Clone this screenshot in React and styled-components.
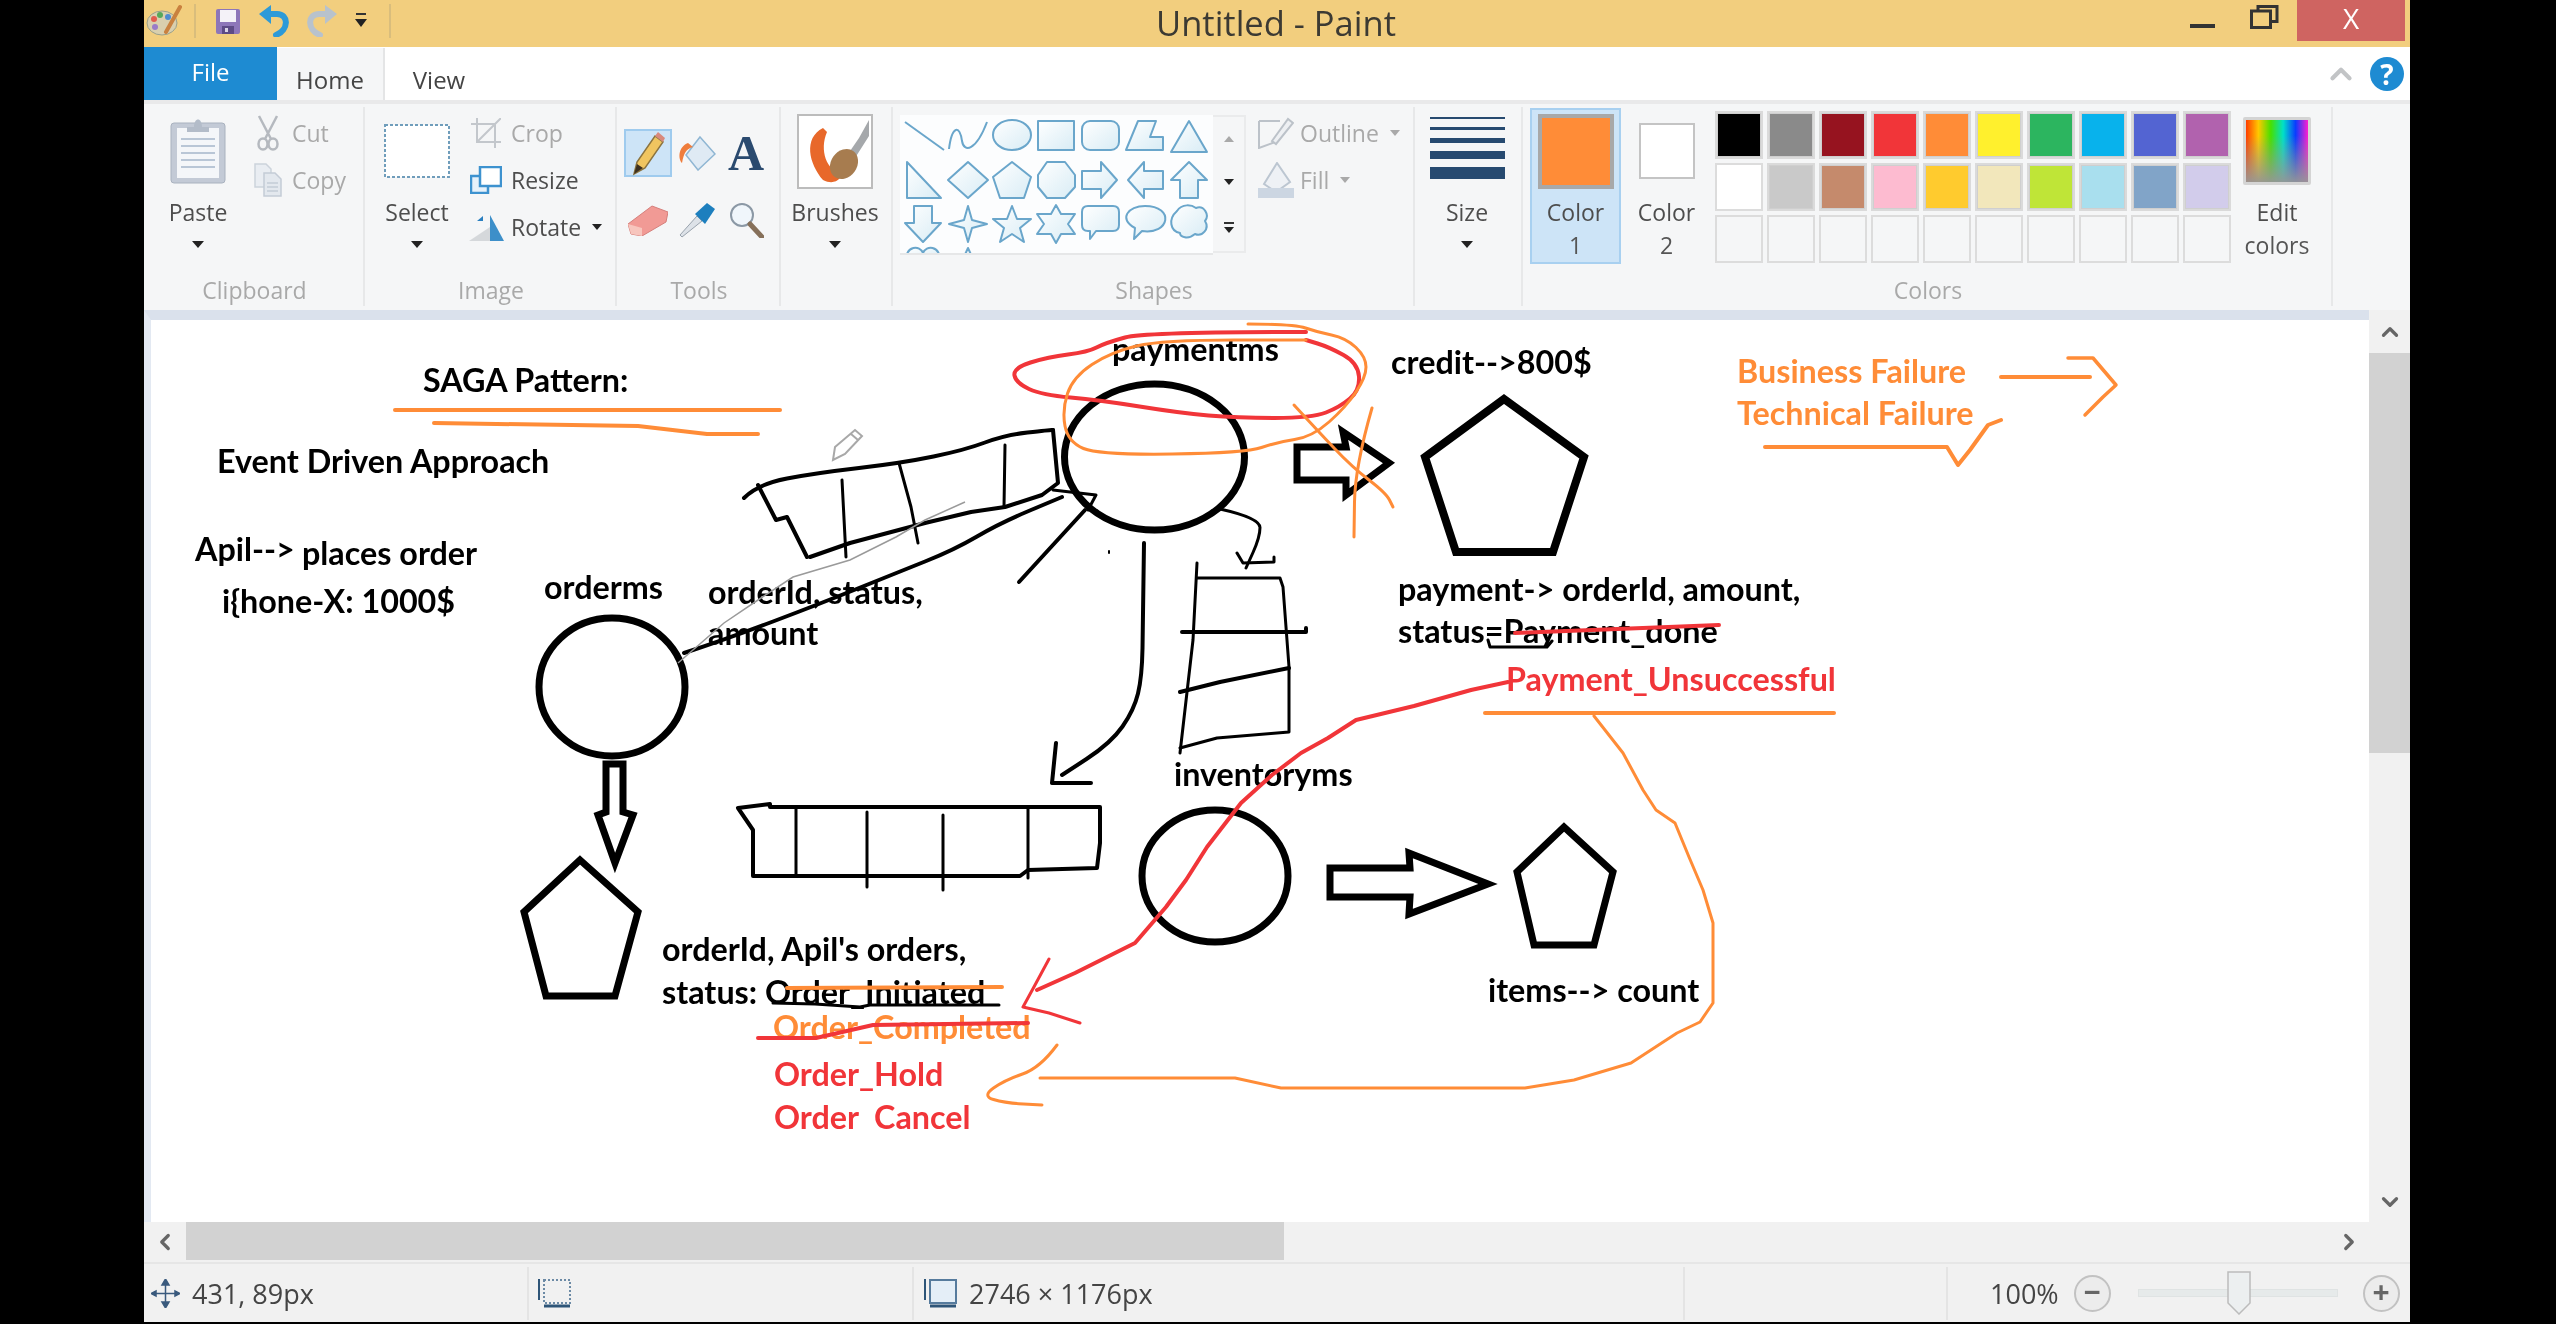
import styled, { createGlobalStyle } from "styled-components";
import { ChevronLeft, ChevronRight, ChevronUp, ChevronDown } from "lucide-react";

const ORANGE = "#ff8c37";
const RED = "#f13539";

const GlobalStyle = createGlobalStyle`
  html, body { margin: 0; padding: 0; background: #000; }
  * { box-sizing: border-box; }
`;

const palette = [
  "#000000", "#8a8a8a", "#96131f", "#f13539", "#ff8c37", "#fff02d", "#2cb55f", "#08b2ec", "#5364d2", "#b162ae",
  "#ffffff", "#c9c9c9", "#c58a6c", "#fdbbd0", "#ffcb2e", "#f2e7bb", "#bfe537", "#a9dfee", "#81a4c8", "#d2cceb",
  null, null, null, null, null, null, null, null, null, null,
];

const notes = [
  { x: 423, y: 381, t: "SAGA Pattern:" },
  { x: 217, y: 462, t: "Event Driven Approach" },
  { x: 195, y: 550, t: "Apil-->" },
  { x: 302, y: 554, t: "places order" },
  { x: 222, y: 602, t: "i{hone-X: 1000$" },
  { x: 544, y: 588, t: "orderms" },
  { x: 708, y: 593, t: "orderId, status," },
  { x: 708, y: 634, t: "amount" },
  { x: 1112, y: 350, t: "paymentms" },
  { x: 1391, y: 363, t: "credit-->800$" },
  { x: 1398, y: 590, t: "payment-> orderId, amount," },
  { x: 1398, y: 632, t: "status=Payment_done" },
  { x: 1506, y: 680, t: "Payment_Unsuccessful", c: RED },
  { x: 1174, y: 775, t: "inventoryms" },
  { x: 1737, y: 372, t: "Business Failure", c: ORANGE },
  { x: 1737, y: 414, t: "Technical Failure", c: ORANGE },
  { x: 662, y: 950, t: "orderId, Apil's orders," },
  { x: 662, y: 993, t: "status: Order_Initiated" },
  { x: 773, y: 1028, t: "Order_Completed", c: ORANGE },
  { x: 774, y: 1075, t: "Order_Hold", c: RED },
  { x: 774, y: 1118, t: "Order  Cancel", c: RED },
  { x: 1488, y: 991, t: "items--> count" },
];

// path through the midpoints, so a few points read as a hand drawn curve
function smooth(pts) {
  let d = `M${pts[0][0]} ${pts[0][1]}`;
  for (let i = 1; i < pts.length - 1; i++) {
    const mx = (pts[i][0] + pts[i + 1][0]) / 2;
    const my = (pts[i][1] + pts[i + 1][1]) / 2;
    d += ` Q${pts[i][0]} ${pts[i][1]} ${mx} ${my}`;
  }
  const last = pts[pts.length - 1];
  return d + ` L${last[0]} ${last[1]}`;
}

function line(pts) {
  return "M" + pts.map((p) => p.join(" ")).join(" L");
}

const blackStrokes = [
  // payment queue
  { d: smooth([[744, 498], [758, 484], [816, 473], [902, 463], [965, 450], [1005, 435], [1050, 430], [1053, 430]]), w: 4 },
  { d: line([[1053, 430], [1058, 483], [1042, 495], [1005, 507], [971, 512], [925, 523], [850, 543], [810, 557]]), w: 4 },
  { d: line([[758, 485], [776, 520], [787, 517], [807, 557]]), w: 4 },
  { d: line([[842, 480], [846, 557]]), w: 3 },
  { d: line([[899, 463], [911, 507], [918, 543]]), w: 3 },
  { d: line([[1005, 445], [1004, 507]]), w: 3 },
  { d: smooth([[684, 653], [724, 640], [822, 603], [896, 573], [954, 550], [1000, 523], [1062, 497]]), w: 4 },
  { d: line([[1085, 510], [1019, 582]]), w: 4 },
  { d: line([[1053, 490], [1096, 495], [1088, 510]]), w: 3 },
  { d: line([[1109, 551], [1109, 553]]), w: 2 },
  // down to the order queue
  { d: smooth([[1144, 543], [1143, 620], [1142, 677], [1134, 710], [1111, 743], [1062, 775]]), w: 4 },
  { d: line([[1056, 743], [1052, 783], [1091, 783]]), w: 4 },
  // to the inventory queue
  { d: smooth([[1220, 509], [1260, 518], [1260, 537], [1246, 568]]), w: 3 },
  { d: line([[1237, 553], [1243, 563], [1274, 562], [1274, 557]]), w: 3 },
  // inventory queue
  { d: line([[1197, 563], [1193, 640], [1180, 753]]), w: 3 },
  { d: line([[1197, 578], [1280, 578], [1283, 587], [1289, 667], [1289, 732], [1217, 738], [1180, 748]]), w: 3 },
  { d: line([[1182, 632], [1306, 632], [1306, 628]]), w: 4 },
  { d: line([[1180, 692], [1220, 682], [1289, 668]]), w: 4 },
  // order queue
  { d: line([[738, 808], [770, 804], [770, 807], [1100, 807], [1100, 843], [1097, 868], [1028, 870], [1020, 876], [753, 876], [753, 830], [738, 808]]), w: 4 },
  { d: line([[796, 807], [796, 876]]), w: 3 },
  { d: line([[867, 812], [867, 887]]), w: 3 },
  { d: line([[943, 815], [943, 890]]), w: 3 },
  { d: line([[1028, 808], [1028, 878]]), w: 3 },
  // scribbles on the text
  { d: line([[1488, 640], [1490, 647], [1547, 647], [1552, 641]]), w: 3 },
  { d: line([[773, 1003], [815, 1004], [860, 1007], [870, 1005], [999, 1005]]), w: 3 },
];

const heavyPolys = [
  { p: "1297,447 1346,447 1343,432 1389,463 1346,495 1346,480 1297,480", w: 7 },
  { p: "1504,399 1584,457 1553,552 1456,552 1425,457", w: 8 },
  { p: "606,764 623,764 623,812 633,815 615,863 598,815 606,812", w: 7 },
  { p: "580,860 638,912 615,996 546,996 524,912", w: 7 },
  { p: "1330,868 1410,868 1409,853 1488,884 1409,914 1410,897 1330,897", w: 7 },
  { p: "1564,827 1613,872 1594,945 1534,945 1517,872", w: 7 },
];

const colorStrokes = [
  { c: ORANGE, w: 4, d: line([[395, 410], [780, 410]]) },
  { c: ORANGE, w: 4, d: line([[434, 423], [638, 426], [707, 434], [758, 434]]) },
  { c: RED, w: 4, d: smooth([[1306, 332], [1145, 332], [1105, 343], [1088, 352], [1048, 357], [1013, 368], [1016, 383], [1042, 395], [1099, 400], [1180, 413], [1237, 418], [1312, 418], [1340, 407], [1360, 390], [1358, 363], [1329, 347], [1306, 340]]) },
  { c: ORANGE, w: 3, d: smooth([[1248, 324], [1294, 324], [1317, 332], [1346, 338], [1366, 357], [1366, 377], [1346, 407], [1312, 437], [1277, 442], [1246, 453], [1099, 455], [1068, 442], [1062, 410], [1073, 377], [1111, 352], [1162, 340], [1306, 340]]) },
  { c: ORANGE, w: 3, d: smooth([[1294, 405], [1317, 430], [1352, 467], [1386, 493], [1393, 507]]) },
  { c: ORANGE, w: 3, d: smooth([[1372, 408], [1355, 467], [1354, 537]]) },
  { c: RED, w: 4, d: line([[1515, 633], [1719, 625]]) },
  { c: ORANGE, w: 4, d: line([[787, 988], [1002, 987]]) },
  { c: RED, w: 4, d: line([[758, 1038], [816, 1038], [873, 1025], [1028, 1023]]) },
  { c: ORANGE, w: 4, d: line([[2001, 377], [2090, 377]]) },
  { c: ORANGE, w: 3.5, d: line([[2068, 358], [2093, 358], [2116, 385], [2103, 397], [2085, 415]]) },
  { c: ORANGE, w: 4, d: line([[1765, 447], [1947, 447], [1958, 465], [1970, 450], [1988, 425], [2001, 420]]) },
  { c: ORANGE, w: 4, d: line([[1485, 713], [1834, 713]]) },
  { c: ORANGE, w: 3, d: line([[1594, 716], [1623, 753], [1643, 790], [1656, 810], [1675, 823], [1689, 857], [1703, 890], [1713, 923], [1713, 1003], [1700, 1022], [1677, 1033], [1631, 1063], [1574, 1080], [1525, 1088], [1281, 1088], [1235, 1078], [1040, 1078]]) },
  { c: ORANGE, w: 3, d: smooth([[1057, 1045], [1040, 1068], [1005, 1080], [982, 1096], [1005, 1103], [1042, 1105]]) },
  { c: RED, w: 4, d: line([[1508, 682], [1471, 690], [1414, 706], [1356, 720], [1328, 738], [1301, 753], [1272, 775], [1241, 803], [1207, 847], [1186, 880], [1166, 907], [1135, 943], [1105, 958], [1075, 973], [1037, 990]]) },
  { c: RED, w: 3, d: line([[1049, 959], [1035, 985], [1023, 1007], [1049, 1013], [1080, 1023]]) },
];

function Sketch() {
  return (
    <SketchLayer viewBox="151 320 2218 902" width="2218" height="902">
      <g fill="none" stroke="#000" strokeLinejoin="round" strokeLinecap="round">
        <ellipse cx="1154.5" cy="457" rx="90" ry="73" strokeWidth="7" />
        <ellipse cx="612" cy="687" rx="73" ry="69" strokeWidth="7" />
        <ellipse cx="1215" cy="876" rx="73" ry="66" strokeWidth="7" />
        {heavyPolys.map((s) => (
          <polygon key={s.p} points={s.p} strokeWidth={s.w} strokeLinejoin="miter" />
        ))}
        {blackStrokes.map((s) => (
          <path key={s.d} d={s.d} strokeWidth={s.w} />
        ))}
      </g>
      <path
        d={line([[965, 502], [925, 520], [896, 537], [850, 560], [793, 577], [758, 600], [724, 623], [701, 643], [678, 663]])}
        fill="none"
        stroke="#9a9a9a"
        strokeWidth="1.5"
      />
      <g fill="none" strokeLinejoin="round" strokeLinecap="round">
        {colorStrokes.map((s) => (
          <path key={s.d} d={s.d} stroke={s.c} strokeWidth={s.w} />
        ))}
      </g>
      <path d="M833 460 L835 447 L855 430 L862 436 L845 454 Z M851 434 L858 440" fill="#fff" stroke="#a8a8a8" strokeWidth="2" />
    </SketchLayer>
  );
}

function PaintLogo() {
  return (
    <svg width="36" height="34" viewBox="0 0 36 34">
      <ellipse cx="16" cy="19" rx="15" ry="12" fill="#d9cfae" stroke="#9aa08a" />
      <circle cx="8" cy="15" r="3" fill="#e25b4d" />
      <circle cx="14" cy="11" r="3" fill="#57a85a" />
      <circle cx="22" cy="13" r="3" fill="#4f8bd0" />
      <circle cx="9" cy="23" r="3" fill="#9a7bc8" />
      <path d="M20 28 L34 3" stroke="#c9813f" strokeWidth="4" strokeLinecap="round" />
    </svg>
  );
}

function SaveIcon() {
  return (
    <svg width="24" height="25" viewBox="0 0 24 25">
      <rect width="24" height="25" rx="2" fill="#8d76b9" />
      <rect x="4" y="1" width="16" height="12" fill="#f4f2f8" />
      <rect x="6" y="17" width="12" height="8" fill="#5d4b86" />
      <rect x="9" y="19" width="3" height="4" fill="#d8d2e6" />
    </svg>
  );
}

function TurnArrow({ color, flip }) {
  return (
    <svg width="32" height="32" viewBox="0 0 32 32" style={flip ? { transform: "scaleX(-1)" } : undefined}>
      <path d="M9 9 H18 C30 9 30 25 17 30" fill="none" stroke={color} strokeWidth="6" strokeLinecap="round" />
      <path d="M12 0 L12 19 L0 9 Z" fill={color} />
    </svg>
  );
}

function QatMenu() {
  return (
    <svg width="12" height="18" viewBox="0 0 12 18">
      <rect x="1" y="1" width="10" height="2" fill="#333" />
      <path d="M0 7 H12 L6 15 Z" fill="#222" />
    </svg>
  );
}

function ClipboardIcon() {
  return (
    <svg width="56" height="68" viewBox="0 0 56 68">
      <rect x="1" y="6" width="54" height="60" rx="3" fill="#c3cad6" stroke="#a9b2bf" />
      <rect x="7" y="11" width="42" height="50" fill="#f4f6f9" />
      <path d="M11 22 H45 M11 29 H45 M11 36 H45 M11 43 H45 M11 50 H45" stroke="#b9c6d6" strokeWidth="2" />
      <path d="M17 10 H24 C24 0 32 0 32 10 H39 V15 H17 Z" fill="#b3bcc9" />
    </svg>
  );
}

function ScissorsIcon() {
  return (
    <svg width="24" height="36" viewBox="0 0 24 36" fill="none" stroke="#b5b9bf" strokeWidth="2.5">
      <path d="M3 1 L15 24 M21 1 L9 24" />
      <ellipse cx="7" cy="29" rx="4.5" ry="5.5" />
      <ellipse cx="17" cy="29" rx="4.5" ry="5.5" />
    </svg>
  );
}

function CopyIcon() {
  return (
    <svg width="28" height="34" viewBox="0 0 28 34">
      <path d="M1 1 H12 L17 6 V24 H1 Z" fill="#e9edf2" stroke="#ccd3db" strokeWidth="1.5" />
      <path d="M10 10 H21 L27 16 V33 H10 Z" fill="#e3e8ee" stroke="#c4ccd6" strokeWidth="1.5" />
      <path d="M13 20 H24 M13 24 H24 M13 28 H24" stroke="#c4ccd6" strokeWidth="1.5" />
    </svg>
  );
}

function SelectIcon() {
  return (
    <svg width="66" height="54" viewBox="0 0 66 54">
      <rect x="1" y="1" width="64" height="52" fill="#fff" stroke="#6f9dbb" strokeWidth="2" strokeDasharray="3 2" />
    </svg>
  );
}

function CropIcon() {
  return (
    <svg width="30" height="30" viewBox="0 0 30 30" fill="none" stroke="#c3c7cc" strokeWidth="2">
      <path d="M0 6 H24 V30 M6 0 V24 H30 M6 24 L30 0" />
    </svg>
  );
}

function ResizeIcon() {
  return (
    <svg width="32" height="28" viewBox="0 0 32 28" fill="#fff" stroke="#3d92cf" strokeWidth="2.5">
      <rect x="1" y="10" width="17" height="17" fill="#e6f1fa" />
      <rect x="10" y="1" width="21" height="19" />
    </svg>
  );
}

function RotateIcon() {
  return (
    <svg width="35" height="28" viewBox="0 0 35 28">
      <path d="M21 2 L35 28 H21 Z" fill="#3d8fc9" />
      <path d="M21 14 L21 28 H0 Z" fill="#d5d8db" />
      <path d="M8 8 L14 3 L14 8 Z" fill="#2a7fc0" />
    </svg>
  );
}

function PencilIcon() {
  return (
    <svg width="34" height="46" viewBox="0 0 34 46">
      <path d="M3 44 L6 32 L24 6 L32 12 L14 38 Z" fill="#f0c560" stroke="#8b7440" strokeWidth="1.5" />
      <path d="M24 6 L27 2 L34 8 L32 12 Z" fill="#d9897c" />
      <path d="M3 44 L6 34 L12 38 Z" fill="#3c3020" />
    </svg>
  );
}

function FillIcon() {
  return (
    <svg width="38" height="36" viewBox="0 0 38 36">
      <path d="M22 2 L37 19 L20 35 L8 20 Z" fill="#dfeaf4" stroke="#8fb6d3" strokeWidth="1.5" />
      <path d="M10 8 C0 12 0 24 4 28 C6 18 8 14 15 12 Z" fill="#ef7d3c" />
    </svg>
  );
}

function EraserIcon() {
  return (
    <svg width="40" height="32" viewBox="0 0 40 32">
      <path d="M0 20 L24 2 L40 8 L38 18 L14 32 L3 30 Z" fill="#f19a95" stroke="#d57f7b" />
      <path d="M0 20 L14 24 L14 32 L3 30 Z" fill="#f7c5bd" />
    </svg>
  );
}

function PickerIcon() {
  return (
    <svg width="37" height="36" viewBox="0 0 37 36">
      <path d="M3 35 L1 33 L18 14 L23 19 Z" fill="#dde2e8" stroke="#99a3ad" />
      <path d="M16 12 L28 1 L36 7 L26 22 Z" fill="#1d7fbe" />
    </svg>
  );
}

function MagnifierIcon() {
  return (
    <svg width="35" height="36" viewBox="0 0 35 36" fill="none">
      <circle cx="13" cy="13" r="11" fill="#f0f6fb" stroke="#8b98a5" strokeWidth="2" />
      <path d="M21 22 L33 35" stroke="#86705a" strokeWidth="5" strokeLinecap="round" />
    </svg>
  );
}

function BrushesIcon() {
  return (
    <svg width="76" height="75" viewBox="0 0 76 75">
      <rect x="1" y="1" width="74" height="73" fill="#fff" stroke="#bcbcbc" strokeWidth="2" />
      <path d="M26 14 C6 24 12 50 26 66 C38 72 46 64 44 58 C30 58 22 36 30 18 Z" fill="#e8682a" />
      <path d="M40 56 L62 24 L72 6 L72 22 L58 44 Z" fill="#a5a8ab" />
      <ellipse cx="47" cy="50" rx="13" ry="16" fill="#a77c4f" transform="rotate(35 47 50)" />
    </svg>
  );
}

function ShapeGallery() {
  return (
    <svg width="313" height="140" viewBox="0 0 313 140">
      <defs>
        <linearGradient id="shapeFill" x1="0" y1="0" x2="1" y2="1">
          <stop offset="0" stopColor="#ffffff" />
          <stop offset="1" stopColor="#d8ecf5" />
        </linearGradient>
      </defs>
      <g fill="url(#shapeFill)" stroke="#6aa6cb" strokeWidth="2" strokeLinejoin="round">
        <path d="M5 7 L44 35" fill="none" />
        <path d="M49 34 C52 10 60 10 62 26 C64 38 76 36 87 7" fill="none" />
        <ellipse cx="112" cy="20" rx="19" ry="15" />
        <rect x="138" y="6" width="36" height="29" />
        <rect x="182" y="6" width="37" height="29" rx="8" />
        <polygon points="226,35 238,6 256,6 250,22 263,22 263,35" />
        <polygon points="289,6 307,37 271,37" />

        <polygon points="7,47 41,83 7,83" />
        <polygon points="68,47 88,65 68,83 48,65" />
        <polygon points="112,47 131,62 124,83 100,83 93,62" />
        <polygon points="147,47 165,47 175,60 175,72 165,83 147,83 138,72 138,60" />
        <polygon points="182,56 201,56 201,47 217,65 201,83 201,74 182,74" />
        <polygon points="263,56 244,56 244,47 228,65 244,83 244,74 263,74" />
        <polygon points="289,47 307,65 298,65 298,83 280,83 280,65 271,65" />

        <polygon points="14,91 32,91 32,108 41,108 23,127 5,108 14,108" />
        <polygon points="68,91 72,105 87,109 72,113 68,127 64,113 49,109 64,105" />
        <polygon points="112,91 117,104 131,104 120,113 124,127 112,119 100,127 104,113 93,104 107,104" />
        <polygon points="156,90 161,99 175,99 168,109 175,119 161,119 156,128 151,119 137,119 144,109 137,99 151,99" />
        <path d="M188 91 H213 Q219 91 219 97 V110 Q219 116 213 116 H196 L190 124 V116 H188 Q182 116 182 110 V97 Q182 91 188 91 Z" />
        <path d="M245 91 C275 91 270 120 242 116 L234 124 L235 113 C218 104 228 91 245 91 Z" />
        <path d="M277 96 C282 88 292 90 296 93 C304 90 310 100 305 106 C310 114 302 122 295 119 C288 125 280 122 280 118 C270 116 268 104 277 96 Z" />

        <path d="M6 146 C6 130 20 130 23 138 C26 130 40 130 40 146" />
        <path d="M68 133 L74 146 H62 Z" />
      </g>
    </svg>
  );
}

function OutlineIcon() {
  return (
    <svg width="36" height="32" viewBox="0 0 36 32" fill="none" stroke="#bcc2c9" strokeWidth="2">
      <path d="M1 4 H22 M1 4 V31 L20 24 L24 12" />
      <path d="M14 24 L30 2 L35 6 L18 27 Z" fill="#eef0f3" />
    </svg>
  );
}

function FillToolIcon() {
  return (
    <svg width="36" height="36" viewBox="0 0 36 36">
      <path d="M6 22 L19 1 L32 20 L18 30 Z" fill="#eef1f5" stroke="#bcc6d1" strokeWidth="2" />
      <rect x="0" y="26" width="36" height="10" fill="#ccd6e2" />
    </svg>
  );
}

function MoveIcon() {
  return (
    <svg width="29" height="29" viewBox="0 0 29 29" fill="#3a5a7d" stroke="#3a5a7d" strokeWidth="1.5">
      <path d="M14.5 1 V28 M1 14.5 H28" fill="none" />
      <path d="M14.5 0 L11 6 H18 Z M14.5 29 L11 23 H18 Z M0 14.5 L5 12 V17 Z M29 14.5 L24 12 V17 Z" />
    </svg>
  );
}

function SizeIcon({ dashed }) {
  return (
    <svg width="34" height="31" viewBox="0 0 34 31">
      <rect x="7" y="2" width="26" height="23" fill={dashed ? "none" : "#e4eef7"} stroke={dashed ? "#6c8aa5" : "#567b9d"} strokeWidth="2" strokeDasharray={dashed ? "2 2" : undefined} />
      <path d="M2 1 V22" stroke="#2e5578" strokeWidth="2" />
      <path d="M7 28 H33" stroke="#2e5578" strokeWidth="3" />
    </svg>
  );
}

function WindowRestore() {
  return (
    <svg width="29" height="24" viewBox="0 0 29 24" fill="none" stroke="#333" strokeWidth="3" style={{ marginTop: 5 }}>
      <rect x="8" y="1.5" width="19" height="15" />
      <rect x="1.5" y="6" width="19" height="16.5" fill="#f2ce7e" />
    </svg>
  );
}

function SliderThumb() {
  return (
    <svg width="24" height="44" viewBox="0 0 24 44">
      <path d="M1 1 H23 V32 L12 43 L1 32 Z" fill="#eceff0" stroke="#bcbcbc" strokeWidth="1.5" />
    </svg>
  );
}

export default function App() {
  return (
    <>
      <GlobalStyle />
      <Page>
        <Window>
          <TitleBar>
            <QuickAccess>
              <QatItem $ml={2}><PaintLogo /></QatItem>
              <QatItem $ml={12}><QatRule /></QatItem>
              <QatItem $ml={20}><SaveIcon /></QatItem>
              <QatItem $ml={19}><TurnArrow color="#2d9ad8" /></QatItem>
              <QatItem $ml={14}><TurnArrow color="#b8c2cc" flip /></QatItem>
              <QatItem $ml={18}><QatMenu /></QatItem>
              <QatItem $ml={22}><QatRule /></QatItem>
            </QuickAccess>
            <Title>Untitled - Paint</Title>
            <WindowControls>
              <MinimizeBar />
              <WindowRestore />
              <CloseButton>X</CloseButton>
            </WindowControls>
          </TitleBar>

          <TabRow>
            <Tabs>
              <FileTab>File</FileTab>
              <Tab $active>Home</Tab>
              <Tab>View</Tab>
            </Tabs>
            <TabTools>
              <CollapseChevron size={34} strokeWidth={3} />
              <HelpButton>?</HelpButton>
            </TabTools>
          </TabRow>

          <Ribbon>
            <Group $w={221} label="Clipboard">
              <BigTool $w={76} $ml={16}>
                <IconSlot $pt={3}><ClipboardIcon /></IconSlot>
                <BigLabel>Paste</BigLabel>
                <CaretLine><Caret /></CaretLine>
              </BigTool>
              <SmallList $ml={13}>
                <SmallRow $slot={38}><span><ScissorsIcon /></span><SmallText $muted>Cut</SmallText></SmallRow>
                <SmallRow $slot={38}><span><CopyIcon /></span><SmallText $muted>Copy</SmallText></SmallRow>
              </SmallList>
            </Group>

            <Group $w={252} label="Image">
              <BigTool $w={76} $ml={14}>
                <IconSlot $pt={10}><SelectIcon /></IconSlot>
                <BigLabel>Select</BigLabel>
                <CaretLine><Caret /></CaretLine>
              </BigTool>
              <SmallList $ml={11}>
                <SmallRow $slot={40}><span><CropIcon /></span><SmallText $muted>Crop</SmallText></SmallRow>
                <SmallRow $slot={40}><span><ResizeIcon /></span><SmallText>Resize</SmallText></SmallRow>
                <SmallRow $slot={40}><span><RotateIcon /></span><SmallText>Rotate</SmallText><Caret $small /></SmallRow>
              </SmallList>
            </Group>

            <Group $w={164} label="Tools">
              <ToolGrid>
                <ToolCell $active><PencilIcon /></ToolCell>
                <ToolCell><FillIcon /></ToolCell>
                <ToolCell><TextGlyph>A</TextGlyph></ToolCell>
                <ToolCell><EraserIcon /></ToolCell>
                <ToolCell><PickerIcon /></ToolCell>
                <ToolCell><MagnifierIcon /></ToolCell>
              </ToolGrid>
            </Group>

            <Group $w={112} label="">
              <BigTool $w={108} $ml={0}>
                <IconSlot><BrushesIcon /></IconSlot>
                <BigLabel>Brushes</BigLabel>
                <CaretLine><Caret /></CaretLine>
              </BigTool>
            </Group>

            <Group $w={522} label="Shapes">
              <Gallery><ShapeGallery /></Gallery>
              <GalleryScroll>
                <Caret $up $small $muted />
                <Caret $small />
                <MoreCaret><Caret $small /></MoreCaret>
              </GalleryScroll>
              <SmallList $ml={11}>
                <SmallRow $slot={38}><span><OutlineIcon /></span><SmallText $muted>Outline</SmallText><Caret $small $muted /></SmallRow>
                <SmallRow $slot={38}><span><FillToolIcon /></span><SmallText $muted>Fill</SmallText><Caret $small $muted /></SmallRow>
              </SmallList>
            </Group>

            <Group $w={108} label="">
              <BigTool $w={104} $ml={0}>
                <IconSlot $pt={3}>
                  <SizeLines>
                    <SizeLine $h={2} />
                    <SizeLine $h={3} />
                    <SizeLine $h={5} />
                    <SizeLine $h={8} />
                    <SizeLine $h={12} />
                  </SizeLines>
                </IconSlot>
                <BigLabel>Size</BigLabel>
                <CaretLine><Caret /></CaretLine>
              </BigTool>
            </Group>

            <Group $w={810} label="Colors">
              <ColorButton $active>
                <SwatchSlot $top={6}><Swatch $w={76} $h={75} $c={ORANGE} $border="#a8a8a8" $inset={4} /></SwatchSlot>
                <BigLabel>Color</BigLabel>
                <SecondLine>1</SecondLine>
              </ColorButton>
              <ColorButton>
                <SwatchSlot $top={15}><Swatch $w={56} $h={56} $c="#fff" $border="#c4c4c4" $inset={2} /></SwatchSlot>
                <BigLabel>Color</BigLabel>
                <SecondLine>2</SecondLine>
              </ColorButton>
              <Palette>
                {palette.map((c, i) => (
                  <ColorCell key={i} $c={c} />
                ))}
              </Palette>
              <BigTool $w={92} $ml={0}>
                <IconSlot $pt={3}><Rainbow /></IconSlot>
                <BigLabel>Edit</BigLabel>
                <SecondLine>colors</SecondLine>
              </BigTool>
            </Group>
          </Ribbon>

          <Workspace>
            <Canvas>
              {notes.map((n) => (
                <Note key={n.t} $x={n.x} $y={n.y} $c={n.c}>{n.t}</Note>
              ))}
              <Sketch />
            </Canvas>
            <VScroll>
              <ScrollButton $h={43}><ChevronUp size={26} strokeWidth={3} /></ScrollButton>
              <VThumb />
              <ScrollButton $h={40}><ChevronDown size={26} strokeWidth={3} /></ScrollButton>
            </VScroll>
          </Workspace>

          <HScroll>
            <ScrollButton $w={42}><ChevronLeft size={26} strokeWidth={3} /></ScrollButton>
            <HThumb />
            <ScrollButton $w={82}><ChevronRight size={26} strokeWidth={3} /></ScrollButton>
          </HScroll>

          <StatusBar>
            <StatusCell $w={385} $pl={7}>
              <MoveIcon />
              <StatusText>431, 89px</StatusText>
            </StatusCell>
            <StatusCell $w={385} $pl={8}>
              <SizeIcon dashed />
            </StatusCell>
            <StatusCell $w={771} $pl={9}>
              <SizeIcon />
              <StatusText>2746 × 1176px</StatusText>
            </StatusCell>
            <StatusCell $w={263} />
            <ZoomCell>
              <StatusText>100%</StatusText>
              <ZoomButton $ml={15}>−</ZoomButton>
              <ZoomTrack>
                <ThumbHolder><SliderThumb /></ThumbHolder>
              </ZoomTrack>
              <ZoomButton $ml={25}>+</ZoomButton>
            </ZoomCell>
          </StatusBar>
        </Window>
      </Page>
    </>
  );
}

function Group({ $w, label, children }) {
  return (
    <GroupBox $w={$w}>
      <GroupBody>{children}</GroupBody>
      <GroupLabel>{label}</GroupLabel>
    </GroupBox>
  );
}

const Page = styled.div`
  width: 2556px;
  height: 1324px;
  background: #000;
  display: flex;
  justify-content: center;
  overflow: hidden;
  font-family: "Open Sans", "Liberation Sans", sans-serif;
`;
const Window = styled.div`
  width: 2266px;
  height: 1322px;
  margin-left: -2px;
  display: flex;
  flex-direction: column;
  background: #f5f6f7;
  filter: blur(0.6px);
`;
const TitleBar = styled.div`
  height: 47px;
  flex: none;
  background: #f2ce7e;
  display: grid;
  grid-template-columns: 1fr auto 1fr;
  align-items: start;
`;
const QuickAccess = styled.div`
  display: flex;
  align-items: center;
  height: 42px;
`;
const QatItem = styled.div`
  margin-left: ${(p) => p.$ml}px;
  flex: none;
  display: flex;
`;
const QatRule = styled.div`
  width: 2px;
  height: 34px;
  background: #d9bd7c;
`;
const Title = styled.div`
  height: 47px;
  margin-right: 2px;
  font-size: 34.5px;
  line-height: 46px;
  color: #3c3a33;
`;
const WindowControls = styled.div`
  display: flex;
  justify-content: flex-end;
  align-items: flex-start;
  padding-right: 5px;
`;
const MinimizeBar = styled.div`
  width: 25px;
  height: 4px;
  margin: 24px 35px 0 0;
  background: #333;
`;
const CloseButton = styled.div`
  width: 108px;
  height: 41px;
  margin-left: 18px;
  background: #cf6461;
  color: #fff;
  font-size: 28px;
  line-height: 36px;
  text-align: center;
`;
const TabRow = styled.div`
  height: 53px;
  flex: none;
  background: #fff;
  display: flex;
  justify-content: space-between;
`;
const Tabs = styled.div`
  display: flex;
`;
const FileTab = styled.div`
  width: 133px;
  background: #1e8bd2;
  color: #fff;
  font-size: 24px;
  line-height: 50px;
  text-align: center;
`;
const Tab = styled.div`
  width: 108px;
  margin-top: 1px;
  padding-top: 15px;
  color: #444;
  font-size: 24px;
  line-height: 34px;
  text-align: center;
  background: ${(p) => (p.$active ? "#f5f6f7" : "transparent")};
  border-right: ${(p) => (p.$active ? "2px solid #e4e5e6" : "none")};
`;
const TabTools = styled.div`
  display: flex;
  align-items: center;
  padding-right: 6px;
  gap: 12px;
`;
const CollapseChevron = styled(ChevronUp)`
  color: #c2c4c6;
`;
const HelpButton = styled.div`
  width: 34px;
  height: 34px;
  border-radius: 50%;
  background: #1e8bd2;
  color: #fff;
  font-size: 28px;
  font-weight: 700;
  line-height: 34px;
  text-align: center;
`;
const Ribbon = styled.div`
  height: 210px;
  flex: none;
  display: flex;
  border-top: 4px solid #e9e9ea;
  background: #f5f6f7;
`;
const GroupBox = styled.div`
  width: ${(p) => p.$w}px;
  flex: none;
  display: flex;
  flex-direction: column;
  position: relative;
  &::after {
    content: "";
    position: absolute;
    right: 0;
    top: 3px;
    bottom: 4px;
    width: 2px;
    background: #e7e8e9;
  }
`;
const GroupBody = styled.div`
  height: 166px;
  display: flex;
  align-items: flex-start;
`;
const GroupLabel = styled.div`
  height: 40px;
  color: #a9a9a9;
  font-size: 23px;
  line-height: 40px;
  text-align: center;
`;
const BigTool = styled.div`
  width: ${(p) => p.$w}px;
  margin-left: ${(p) => p.$ml}px;
  padding-top: 10px;
  flex: none;
  display: flex;
  flex-direction: column;
  align-items: center;
`;
const IconSlot = styled.div`
  height: 82px;
  padding-top: ${(p) => p.$pt || 0}px;
  display: flex;
  justify-content: center;
  align-items: flex-start;
`;
const BigLabel = styled.div`
  height: 33px;
  color: #4d4d4d;
  font-size: 23px;
  line-height: 32px;
  white-space: nowrap;
`;
const CaretLine = styled.div`
  height: 30px;
  display: flex;
  align-items: center;
`;
const SecondLine = styled.div`
  height: 33px;
  color: #555;
  font-size: 23px;
  line-height: 33px;
`;
const Caret = styled.i`
  display: block;
  width: 0;
  height: 0;
  border-left: ${(p) => (p.$small ? 5 : 6)}px solid transparent;
  border-right: ${(p) => (p.$small ? 5 : 6)}px solid transparent;
  border-${(p) => (p.$up ? "bottom" : "top")}: ${(p) => (p.$small ? 6 : 7)}px solid ${(p) => (p.$muted ? "#a9a9a9" : "#222")};
`;
const SmallList = styled.div`
  margin-left: ${(p) => p.$ml}px;
  padding-top: 5px;
  display: flex;
  flex-direction: column;
`;
const SmallRow = styled.div`
  height: 47px;
  display: flex;
  align-items: center;
  gap: 5px;
  > span:first-child {
    width: ${(p) => p.$slot}px;
    display: flex;
    justify-content: center;
  }
`;
const SmallText = styled.span`
  margin-right: 6px;
  color: ${(p) => (p.$muted ? "#a9a9a9" : "#4d4d4d")};
  font-size: 23px;
  white-space: nowrap;
`;
const ToolGrid = styled.div`
  margin: 25px 0 0 7px;
  display: grid;
  grid-template-columns: repeat(3, 48px);
  grid-template-rows: 48px 40px;
  column-gap: 1px;
  row-gap: 23px;
`;
const ToolCell = styled.div`
  display: flex;
  justify-content: center;
  align-items: center;
  background: ${(p) => (p.$active ? "#cde4f7" : "transparent")};
  border: 2px solid ${(p) => (p.$active ? "#9fcbee" : "transparent")};
`;
const TextGlyph = styled.span`
  color: #2a4a6f;
  font-family: "Liberation Serif", serif;
  font-size: 50px;
  font-weight: 700;
  line-height: 40px;
`;
const Gallery = styled.div`
  width: 313px;
  height: 140px;
  margin: 11px 0 0 7px;
  flex: none;
  overflow: hidden;
  background: #fcfdfe;
  border-bottom: 2px solid #e6e7e8;
`;
const GalleryScroll = styled.div`
  width: 33px;
  height: 138px;
  margin-top: 11px;
  flex: none;
  display: flex;
  flex-direction: column;
  align-items: center;
  justify-content: space-around;
  border: 2px solid #eaebec;
  border-left: none;
`;
const MoreCaret = styled.div`
  padding-top: 3px;
  border-top: 2px solid #333;
`;
const SizeLines = styled.div`
  width: 75px;
  display: flex;
  flex-direction: column;
  gap: 8px;
`;
const SizeLine = styled.div`
  height: ${(p) => p.$h}px;
  background: #274a70;
`;
const ColorButton = styled.div`
  width: 91px;
  height: 156px;
  margin: 4px 0 0 ${(p) => (p.$active ? "7px" : "0")};
  flex: none;
  display: flex;
  flex-direction: column;
  align-items: center;
  background: ${(p) => (p.$active ? "#cde4f7" : "transparent")};
  border: 2px solid ${(p) => (p.$active ? "#a8d0f0" : "transparent")};
`;
const SwatchSlot = styled.div`
  height: 86px;
  padding-top: ${(p) => p.$top - 2}px;
`;
const Swatch = styled.div`
  width: ${(p) => p.$w}px;
  height: ${(p) => p.$h}px;
  background: ${(p) => p.$c};
  border: ${(p) => p.$inset}px solid ${(p) => p.$border};
`;
const Palette = styled.div`
  margin: 7px 0 0 3px;
  flex: none;
  display: grid;
  grid-template-columns: repeat(10, 48px);
  grid-auto-rows: 48px;
  gap: 4px;
`;
const ColorCell = styled.div`
  background: ${(p) => p.$c || "#f5f6f7"};
  border: 2px solid ${(p) => (p.$c === "#ffffff" || !p.$c ? "#dcdcdc" : "#dadada")};
  box-shadow: inset 0 0 0 ${(p) => (p.$c && p.$c !== "#ffffff" ? "1px" : "0")} #cfcfcf;
`;
const Rainbow = styled.div`
  width: 68px;
  height: 68px;
  border: 3px solid #d4d4d4;
  border-radius: 2px;
  background: linear-gradient(to bottom, rgba(150, 150, 150, 0) 25%, rgba(150, 150, 150, 0.95) 100%),
    linear-gradient(to right, #ff3c00, #ffc800, #46e000, #00e0c8, #0a3cff, #ff1cd0);
`;
const Workspace = styled.div`
  flex: 1;
  min-height: 0;
  display: flex;
`;
const Canvas = styled.div`
  flex: 1;
  position: relative;
  overflow: hidden;
  background: #fff;
  border-top: 10px solid #dae1ec;
  border-left: 7px solid #e3e9f2;
`;
const SketchLayer = styled.svg`
  position: absolute;
  left: 0;
  top: 0;
`;
const Note = styled.div`
  position: absolute;
  left: ${(p) => p.$x - 151}px;
  top: ${(p) => p.$y - 320}px;
  transform: translateY(-54%);
  color: ${(p) => p.$c || "#000"};
  font-family: Lato, "Liberation Sans", sans-serif;
  font-size: 32.3px;
  font-weight: 700;
  line-height: 1;
  white-space: pre;
`;
const VScroll = styled.div`
  width: 41px;
  flex: none;
  display: flex;
  flex-direction: column;
  background: #f1f1f1;
`;
const ScrollButton = styled.div`
  width: ${(p) => (p.$w ? `${p.$w}px` : "100%")};
  height: ${(p) => (p.$h ? `${p.$h}px` : "100%")};
  flex: none;
  display: flex;
  justify-content: center;
  align-items: center;
  color: #666;
`;
const VThumb = styled.div`
  height: 400px;
  background: #d2d2d2;
  margin-bottom: auto;
`;
const HScroll = styled.div`
  height: 40px;
  flex: none;
  display: flex;
  justify-content: space-between;
  background: #f1f1f1;
  ${ScrollButton}:last-child {
    padding-right: 40px;
  }
`;
const HThumb = styled.div`
  width: 1098px;
  height: 38px;
  background: #d2d2d2;
  margin-right: auto;
`;
const StatusBar = styled.div`
  height: 60px;
  flex: none;
  display: flex;
  background: #f1f1f1;
  border-top: 2px solid #e6e6e6;
`;
const StatusCell = styled.div`
  width: ${(p) => p.$w}px;
  padding-left: ${(p) => p.$pl || 0}px;
  margin: 3px 0 2px;
  flex: none;
  display: flex;
  align-items: center;
  gap: 12px;
  border-right: 2px solid #e4e4e4;
`;
const StatusText = styled.span`
  color: #444;
  font-size: 27px;
  white-space: nowrap;
`;
const ZoomCell = styled.div`
  flex: 1;
  padding-left: 42px;
  display: flex;
  align-items: center;
`;
const ZoomButton = styled.div`
  width: 37px;
  height: 37px;
  margin-left: ${(p) => p.$ml}px;
  flex: none;
  border-radius: 50%;
  border: 2px solid #c2c2c2;
  background: #ececec;
  color: #666;
  font-size: 30px;
  font-weight: 700;
  line-height: 30px;
  text-align: center;
`;
const ZoomTrack = styled.div`
  width: 200px;
  height: 8px;
  margin-left: 27px;
  flex: none;
  position: relative;
  background: #e6eaea;
  border: 1px solid #dfe3e3;
`;
const ThumbHolder = styled.div`
  position: absolute;
  left: 88px;
  top: -19px;
  line-height: 0;
`;
